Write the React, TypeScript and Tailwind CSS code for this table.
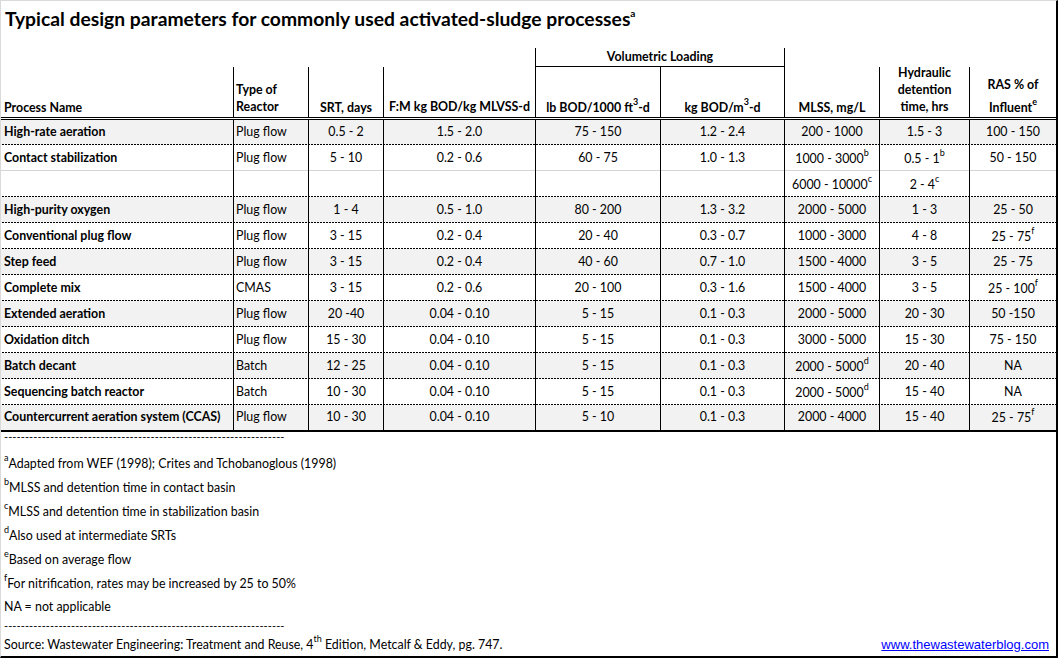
import type { ReactNode } from 'react';

type V = string | [string, string];

type Row = { name: string; type: string; vals: V[]; shade: boolean; line: 'dot' | 'gray' | 'none' };

const rows: Row[] = [
  { name: 'High-rate aeration', type: 'Plug flow', vals: ['0.5 - 2', '1.5 - 2.0', '75 - 150', '1.2 - 2.4', '200 - 1000', '1.5 - 3', '100 - 150'], shade: true, line: 'dot' },
  { name: 'Contact stabilization', type: 'Plug flow', vals: ['5 - 10', '0.2 - 0.6', '60 - 75', '1.0 - 1.3', ['1000 - 3000', 'b'], ['0.5 - 1', 'b'], '50 - 150'], shade: false, line: 'gray' },
  { name: '', type: '', vals: ['', '', '', '', ['6000 - 10000', 'c'], ['2 - 4', 'c'], ''], shade: false, line: 'dot' },
  { name: 'High-purity oxygen', type: 'Plug flow', vals: ['1 - 4', '0.5 - 1.0', '80 - 200', '1.3 - 3.2', '2000 - 5000', '1 - 3', '25 - 50'], shade: true, line: 'dot' },
  { name: 'Conventional plug flow', type: 'Plug flow', vals: ['3 - 15', '0.2 - 0.4', '20 - 40', '0.3 - 0.7', '1000 - 3000', '4 - 8', ['25 - 75', 'f']], shade: false, line: 'dot' },
  { name: 'Step feed', type: 'Plug flow', vals: ['3 - 15', '0.2 - 0.4', '40 - 60', '0.7 - 1.0', '1500 - 4000', '3 - 5', '25 - 75'], shade: true, line: 'dot' },
  { name: 'Complete mix', type: 'CMAS', vals: ['3 - 15', '0.2 - 0.6', '20 - 100', '0.3 - 1.6', '1500 - 4000', '3 - 5', ['25 - 100', 'f']], shade: false, line: 'dot' },
  { name: 'Extended aeration', type: 'Plug flow', vals: ['20 -40', '0.04 - 0.10', '5 - 15', '0.1 - 0.3', '2000 - 5000', '20 - 30', '50 -150'], shade: true, line: 'dot' },
  { name: 'Oxidation ditch', type: 'Plug flow', vals: ['15 - 30', '0.04 - 0.10', '5 - 15', '0.1 - 0.3', '3000 - 5000', '15 - 30', '75 - 150'], shade: false, line: 'dot' },
  { name: 'Batch decant', type: 'Batch', vals: ['12 - 25', '0.04 - 0.10', '5 - 15', '0.1 - 0.3', ['2000 - 5000', 'd'], '20 - 40', 'NA'], shade: true, line: 'dot' },
  { name: 'Sequencing batch reactor', type: 'Batch', vals: ['10 - 30', '0.04 - 0.10', '5 - 15', '0.1 - 0.3', ['2000 - 5000', 'd'], '15 - 40', 'NA'], shade: false, line: 'dot' },
  { name: 'Countercurrent aeration system (CCAS)', type: 'Plug flow', vals: ['10 - 30', '0.04 - 0.10', '5 - 10', '0.1 - 0.3', '2000 - 4000', '15 - 40', ['25 - 75', 'f']], shade: true, line: 'none' },
];

// widths of the value columns (SRT .. RAS)
const valW = ['w-[75px]', 'w-[152px]', 'w-[125px]', 'w-[124px]', 'w-[95px]', 'w-[90px]', 'flex-1'];

const notes: [string, string][] = [
  ['a', 'Adapted from WEF (1998); Crites and Tchobanoglous (1998)'],
  ['b', 'MLSS and detention time in contact basin'],
  ['c', 'MLSS and detention time in stabilization basin'],
  ['d', 'Also used at intermediate SRTs'],
  ['e', 'Based on average flow'],
  ['f', 'For nitrification, rates may be increased by 25 to 50%'],
];

const dashes = '-'.repeat(67);

function Sup({ children }: { children: ReactNode }) {
  return <span className="align-[7px] text-[9px] leading-none">{children}</span>;
}

function Val({ v }: { v: V }) {
  if (typeof v === 'string') return <>{v}</>;
  return (
    <>
      {v[0]}
      <Sup>{v[1]}</Sup>
    </>
  );
}

function rowLine(line: Row['line']) {
  if (line === 'dot') return 'bg-[linear-gradient(90deg,#000_2px,transparent_2px)] bg-[length:3px_1px] bg-repeat-x bg-bottom';
  if (line === 'gray') return 'bg-[linear-gradient(#d4d4d4,#d4d4d4)] bg-[length:100%_1px] bg-no-repeat bg-bottom';
  return '';
}

export default function App() {
  return (
    <div className="w-[1058px] h-[658px] bg-white text-black font-[Lato,sans-serif] border-t border-l border-[#dadada] border-r-2 border-r-black border-b-2 border-b-black flex flex-col overflow-hidden">
      {/* Title */}
      <div className="h-[47px] pt-[6px] pl-[4px] text-[19.3px] leading-[24px] font-bold">
        Typical design parameters for commonly used activated-sludge processes
        <span className="align-[9px] text-[10px] leading-none">a</span>
      </div>

      {/* Header: group row */}
      <div className="flex h-[19px] text-[12.4px] font-bold">
        <div className="w-[535px] shrink-0 border-r border-black" />
        <div className="w-[249px] shrink-0 border-r border-b border-black flex items-center justify-center">
          Volumetric Loading
        </div>
        <div className="flex-1" />
      </div>

      {/* Header: column names */}
      <div className="flex h-[53px] text-[12.4px] font-bold leading-[17px] border-b-[3px] border-double border-black">
        <div className="w-[233px] shrink-0 border-r border-black flex flex-col justify-end pl-[3px] pb-[1px]">Process Name</div>
        <div className="w-[75px] shrink-0 border-r border-black flex flex-col justify-end pl-[2px] pb-[2px]">
          <span>Type of</span>
          <span>Reactor</span>
        </div>
        <div className="w-[75px] shrink-0 border-r border-black flex flex-col justify-end items-center pb-[1px]">SRT, days</div>
        <div className="w-[152px] shrink-0 border-r border-black flex flex-col justify-end items-center pb-[2px]">F:M kg BOD/kg MLVSS-d</div>
        <div className="w-[125px] shrink-0 border-r border-black flex flex-col justify-end items-center pb-[1px]">
          <span>
            lb BOD/1000 ft<Sup>3</Sup>-d
          </span>
        </div>
        <div className="w-[124px] shrink-0 border-r border-black flex flex-col justify-end items-center pb-[1px]">
          <span>
            kg BOD/m<Sup>3</Sup>-d
          </span>
        </div>
        <div className="w-[95px] shrink-0 border-r border-black flex flex-col justify-end items-center pb-[1px]">MLSS, mg/L</div>
        <div className="w-[90px] shrink-0 border-r border-black flex flex-col justify-end items-center pb-[2px]">
          <span>Hydraulic</span>
          <span>detention</span>
          <span>time, hrs</span>
        </div>
        <div className="flex-1 flex flex-col justify-end items-center pb-[1px]">
          <span className="mb-[4px]">RAS % of</span>
          <span>
            Influent<Sup>e</Sup>
          </span>
        </div>
      </div>

      {/* Body rows */}
      <div className="border-b-2 border-black text-[12.4px]">
        {rows.map((r, i) => (
          <div
            key={i}
            className={`flex ${i === 0 || i === rows.length - 1 ? 'h-[25px]' : 'h-[26px]'} ${r.shade ? 'bg-[#f2f2f2]' : 'bg-white'} ${rowLine(r.line)}`}
          >
            <div className="w-[233px] shrink-0 h-full border-r border-black flex items-center pl-[3px] font-bold whitespace-nowrap">
              {r.name}
            </div>
            <div className="w-[75px] shrink-0 h-full border-r border-black flex items-center pl-[2px]">{r.type}</div>
            {r.vals.map((v, j) => (
              <div
                key={j}
                className={`${valW[j]} ${j < r.vals.length - 1 ? 'shrink-0 border-r border-black' : ''} h-full flex items-center justify-center whitespace-nowrap`}
              >
                <span>
                  <Val v={v} />
                </span>
              </div>
            ))}
          </div>
        ))}
      </div>

      {/* Footnotes */}
      <div className="flex-1 flex flex-col pl-[3px] text-[12.4px]">
        <div className="h-[12px] leading-[12px] mt-[-1px] text-[11px] tracking-[0.1px] overflow-hidden whitespace-nowrap">{dashes}</div>
        <div className="h-[8px]" />
        {notes.map(([k, t]) => (
          <div key={k} className="h-[24px] flex items-center">
            <span>
              <Sup>{k}</Sup>
              {t}
            </span>
          </div>
        ))}
        <div className="h-[24px] flex items-center">NA = not applicable</div>
        <div className="h-[14px] leading-[14px] text-[11px] tracking-[0.1px] overflow-hidden whitespace-nowrap">{dashes}</div>
        <div className="flex-1 flex items-center justify-between pr-[7px]">
          <span>
            Source: Wastewater Engineering: Treatment and Reuse, 4<Sup>th</Sup> Edition, Metcalf &amp; Eddy, pg. 747.
          </span>
          <a href="#" className="font-['Liberation_Sans',Arial,sans-serif] text-[13px] text-[#0000ff] underline">
            www.thewastewaterblog.com
          </a>
        </div>
      </div>
    </div>
  );
}
